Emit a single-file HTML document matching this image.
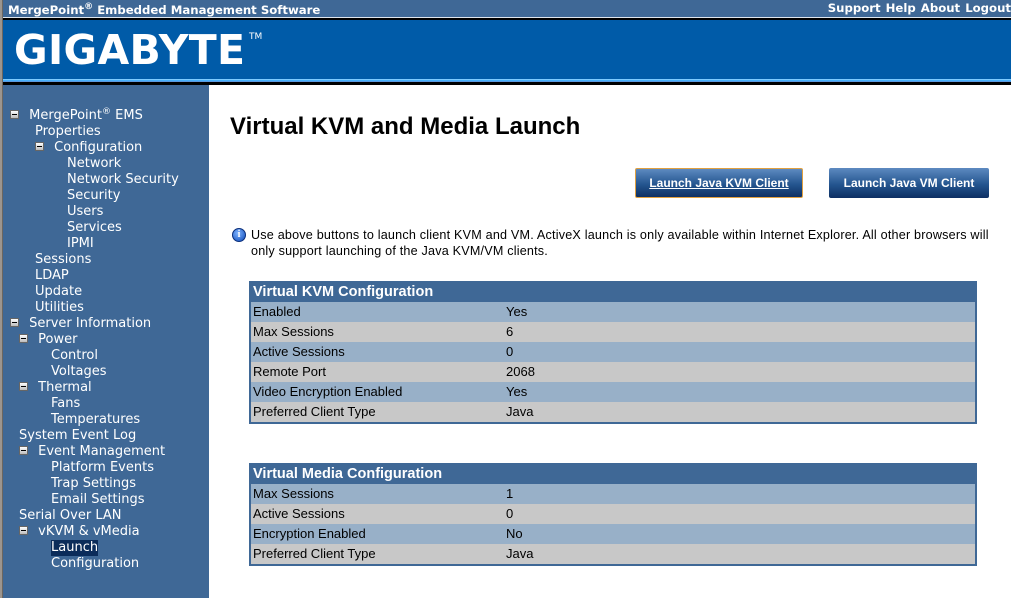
<!DOCTYPE html>
<html><head><meta charset="utf-8"><style>
*{margin:0;padding:0;box-sizing:border-box}
body{width:1011px;height:598px;overflow:hidden;background:#fff;position:relative;font-family:"Liberation Sans",Arial,sans-serif}
.lb{position:absolute;left:0;top:0;width:3px;height:598px;background:#9c958e;border-right:1px solid #6b6660}
.top{position:absolute;left:3px;top:0;right:0;height:17px;background:#3f6896;color:#fff;font:bold 11.7px "DejaVu Sans",sans-serif;line-height:18px}
.top .l{position:absolute;left:5px;top:1px}
.top .r{position:absolute;right:0;top:-1px;word-spacing:1px}
sup{font-size:9px;position:relative;top:-5px;vertical-align:baseline;line-height:0}
.wl{position:absolute;left:3px;right:0;top:17px;height:1px;background:#dfe6ee}
.bk1{position:absolute;left:3px;right:0;top:18px;height:2px;background:#000}
.ban{position:absolute;left:3px;right:0;top:20px;height:59px;background:#005ba8}
.logo{position:absolute;left:11px;top:10px;color:#fff;font:bold 41px "DejaVu Sans",sans-serif;line-height:41px;letter-spacing:0.3px}
.tm{position:absolute;left:246px;top:12px;color:#fff;font:9px "DejaVu Sans",sans-serif}
.cy{position:absolute;left:3px;right:0;top:79px;height:3px;background:linear-gradient(#9fd8ff,#3ab0ff,#6c8fd0)}
.bk2{position:absolute;left:3px;right:0;top:82px;height:3px;background:#000}
.side{position:absolute;left:3px;top:85px;width:206px;height:513px;background:#3f6896;color:#fff;font:13px "DejaVu Sans",sans-serif}
.side div{position:absolute;white-space:nowrap;line-height:16px;height:16px;margin-top:2px}
.bx{display:inline-block;width:9px;height:9px;background:linear-gradient(#fff,#bbb);border:1px solid #666;position:relative;margin-right:6px;vertical-align:0}
.bx:after{content:"";position:absolute;left:1px;top:3px;width:5px;height:1px;background:#000}
.sel{background:#0b2c5a}
h1{position:absolute;left:230px;top:113px;font:bold 24px "Liberation Sans",Arial,sans-serif;color:#000;line-height:28px}
.btn{position:absolute;top:168px;height:30px;background:linear-gradient(#5d8ac0,#24558f 55%,#0d2f63);color:#fff;font:bold 12px "Liberation Sans",Arial,sans-serif;text-align:center;line-height:30px;border-radius:2px}
.info{position:absolute;left:232px;top:227px;font:12.6px "Liberation Sans",Arial,sans-serif;letter-spacing:0.2px;color:#000;line-height:16px;width:779px;white-space:nowrap;padding-left:19px}
.ic{position:absolute;left:0;top:1px;width:14px;height:14px;border-radius:50%;background:radial-gradient(circle at 40% 35%,#7fb4ff,#0b48b8);border:1px solid #0a2e7a;color:#fff;font:bold 10px "Liberation Serif",serif;text-align:center;line-height:12px;letter-spacing:0}
table{position:absolute;left:249px;width:728px;border:2px solid #3f6896;border-collapse:collapse;font:13px "Liberation Sans",Arial,sans-serif}
th{background:#3f6896;color:#fff;font:bold 14.5px "Liberation Sans",Arial,sans-serif;text-align:left;height:19px;padding:0 2px;line-height:19px}
td{height:20px;padding:0 2px;line-height:20px}
tr.a td{background:#98b0c8}tr.b td{background:#c8c8c8}
td:first-child{width:254px}
</style></head><body>
<div class="lb"></div>
<div class="top"><span class="l">MergePoint<sup>®</sup> Embedded Management Software</span><span class="r">Support Help About Logout</span></div>
<div class="wl"></div><div class="bk1"></div>
<div class="ban"><div class="logo">GIGABYTE</div><div class="tm">TM</div></div>
<div class="cy"></div><div class="bk2"></div>
<div class="side">
<div style="left:7px;top:21px"><span class="bx"></span> MergePoint<sup>®</sup> EMS</div>
<div style="left:32px;top:37px">Properties</div>
<div style="left:32px;top:53px"><span class="bx"></span> Configuration</div>
<div style="left:64px;top:69px">Network</div>
<div style="left:64px;top:85px">Network Security</div>
<div style="left:64px;top:101px">Security</div>
<div style="left:64px;top:117px">Users</div>
<div style="left:64px;top:133px">Services</div>
<div style="left:64px;top:149px">IPMI</div>
<div style="left:32px;top:165px">Sessions</div>
<div style="left:32px;top:181px">LDAP</div>
<div style="left:32px;top:197px">Update</div>
<div style="left:32px;top:213px">Utilities</div>
<div style="left:7px;top:229px"><span class="bx"></span> Server Information</div>
<div style="left:16px;top:245px"><span class="bx"></span> Power</div>
<div style="left:48px;top:261px">Control</div>
<div style="left:48px;top:277px">Voltages</div>
<div style="left:16px;top:293px"><span class="bx"></span> Thermal</div>
<div style="left:48px;top:309px">Fans</div>
<div style="left:48px;top:325px">Temperatures</div>
<div style="left:16px;top:341px">System Event Log</div>
<div style="left:16px;top:357px"><span class="bx"></span> Event Management</div>
<div style="left:48px;top:373px">Platform Events</div>
<div style="left:48px;top:389px">Trap Settings</div>
<div style="left:48px;top:405px">Email Settings</div>
<div style="left:16px;top:421px">Serial Over LAN</div>
<div style="left:16px;top:437px"><span class="bx"></span> vKVM &amp; vMedia</div>
<div style="left:48px;top:453px" class="sel">Launch</div>
<div style="left:48px;top:469px">Configuration</div>
</div>
<h1>Virtual KVM and Media Launch</h1>
<div class="btn" style="left:635px;width:168px;border:1px solid #e0a040;text-decoration:underline;line-height:28px">Launch Java KVM Client</div>
<div class="btn" style="left:829px;width:160px">Launch Java VM Client</div>
<div class="info"><span class="ic">i</span>Use above buttons to launch client KVM and VM. ActiveX launch is only available within Internet Explorer. All other browsers will<br>only support launching of the Java KVM/VM clients.</div>
<table style="top:281px">
<tr><th colspan="2">Virtual KVM Configuration</th></tr>
<tr class="a"><td>Enabled</td><td>Yes</td></tr>
<tr class="b"><td>Max Sessions</td><td>6</td></tr>
<tr class="a"><td>Active Sessions</td><td>0</td></tr>
<tr class="b"><td>Remote Port</td><td>2068</td></tr>
<tr class="a"><td>Video Encryption Enabled</td><td>Yes</td></tr>
<tr class="b"><td>Preferred Client Type</td><td>Java</td></tr>
</table>
<table style="top:463px">
<tr><th colspan="2">Virtual Media Configuration</th></tr>
<tr class="a"><td>Max Sessions</td><td>1</td></tr>
<tr class="b"><td>Active Sessions</td><td>0</td></tr>
<tr class="a"><td>Encryption Enabled</td><td>No</td></tr>
<tr class="b"><td>Preferred Client Type</td><td>Java</td></tr>
</table>
</body></html>
